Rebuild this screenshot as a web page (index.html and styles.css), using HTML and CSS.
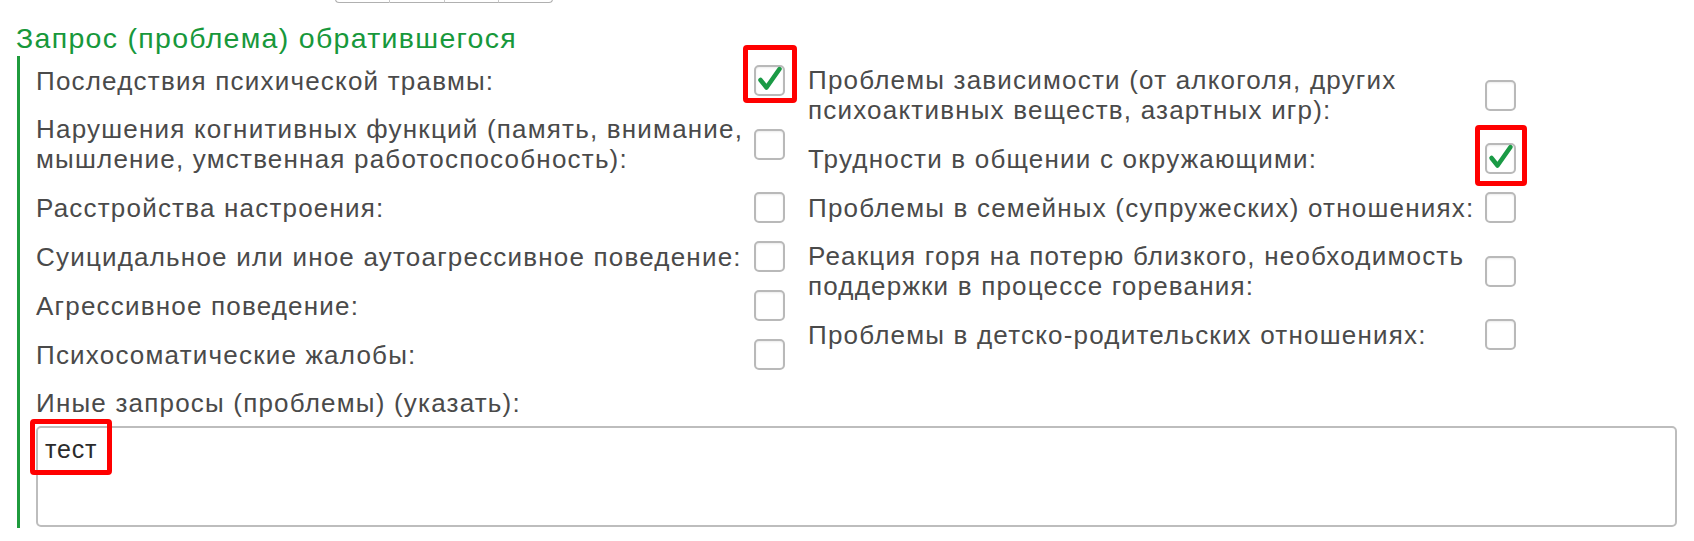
FILE: index.html
```html
<!DOCTYPE html>
<html lang="ru">
<head>
<meta charset="utf-8">
<link rel="stylesheet" href="styles.css">
</head>
<body>
<div class="page">
  <div class="topbar"><span></span><span></span><span></span><span></span></div>
  <h2 class="title">Запрос (проблема) обратившегося</h2>
  <div class="group">
    <div class="cols">
      <div class="col">
        <div class="row"><span class="label">Последствия психической травмы:</span><span class="cb checked"><svg viewBox="0 0 31 31"><polyline points="6.5,16 12.5,23.5 25.5,5"/></svg></span></div>
        <div class="row"><span class="label">Нарушения когнитивных функций (память, внимание,<br>мышление, умственная работоспособность):</span><span class="cb"></span></div>
        <div class="row"><span class="label">Расстройства настроения:</span><span class="cb"></span></div>
        <div class="row"><span class="label">Суицидальное или иное аутоагрессивное поведение:</span><span class="cb"></span></div>
        <div class="row"><span class="label">Агрессивное поведение:</span><span class="cb"></span></div>
        <div class="row"><span class="label">Психосоматические жалобы:</span><span class="cb"></span></div>
      </div>
      <div class="col">
        <div class="row"><span class="label">Проблемы зависимости (от алкоголя, других<br>психоактивных веществ, азартных игр):</span><span class="cb"></span></div>
        <div class="row"><span class="label">Трудности в общении с окружающими:</span><span class="cb checked"><svg viewBox="0 0 31 31"><polyline points="6.5,16 12.5,23.5 25.5,5"/></svg></span></div>
        <div class="row"><span class="label">Проблемы в семейных (супружеских) отношениях:</span><span class="cb"></span></div>
        <div class="row"><span class="label">Реакция горя на потерю близкого, необходимость<br>поддержки в процессе горевания:</span><span class="cb"></span></div>
        <div class="row"><span class="label">Проблемы в детско-родительских отношениях:</span><span class="cb"></span></div>
      </div>
    </div>
    <div class="other-label">Иные запросы (проблемы) (указать):</div>
    <div class="textarea">тест</div>
  </div>
  <div class="mark mark-1"></div>
  <div class="mark mark-2"></div>
  <div class="mark mark-3"></div>
</div>
</body>
</html>
```

FILE: styles.css
```css
html, body {
  margin: 0;
  padding: 0;
  background: #ffffff;
}
.page {
  position: relative;
  width: 1694px;
  height: 541px;
  overflow: hidden;
  font-family: "Liberation Sans", Arial, sans-serif;
  color: #4a4a4a;
}
.topbar {
  display: flex;
  margin-left: 335px;
  width: 218px;
  height: 4px;
  margin-top: -1px;
}
.topbar span {
  flex: 1;
  border-bottom: 1px solid #b0b0b0;
  border-right: 1px solid #c8c8c8;
}
.topbar span:first-child { border-bottom-left-radius: 4px; border-left: 1px solid #b0b0b0; }
.topbar span:last-child { border-bottom-right-radius: 4px; border-right: 1px solid #b0b0b0; }
.title {
  margin: 19px 0 0 16px;
  font-weight: normal;
  font-size: 28.5px;
  letter-spacing: 1.3px;
  line-height: 32px;
  color: #17983b;
}
.group {
  margin: 5px 0 0 17px;
  border-left: 3px solid #1f9b3d;
  padding-left: 16px;
  padding-bottom: 1px;
}
.cols {
  display: grid;
  grid-template-columns: 749px 708px;
  column-gap: 23px;
  align-items: start;
  margin-top: -3px;
}
.row {
  display: flex;
  align-items: center;
  gap: 8px;
  padding: 9px 0;
}
.label {
  flex: 1;
  font-size: 26px;
  letter-spacing: 1.2px;
  line-height: 30px;
  white-space: nowrap;
}
.cb {
  flex: none;
  width: 31px;
  height: 31px;
  box-sizing: border-box;
  border: 2px solid #b9b9b9;
  border-radius: 5px;
  box-shadow: inset 0 1px 2px rgba(0,0,0,0.08);
  background: #fff;
  position: relative;
}
.cb svg {
  position: absolute;
  left: -2px;
  top: -3px;
  width: 31px;
  height: 31px;
  overflow: visible;
}
.cb svg polyline {
  fill: none;
  stroke: #1a9a45;
  stroke-width: 4.5;
  stroke-linecap: round;
  stroke-linejoin: round;
}
.other-label {
  font-size: 26px;
  letter-spacing: 1.2px;
  line-height: 30px;
  padding: 9px 0 8px;
}
.textarea {
  width: 1641px;
  height: 101px;
  box-sizing: border-box;
  border: 2px solid #bdbdbd;
  border-radius: 5px;
  padding: 7px 7px;
  font-size: 25px;
  letter-spacing: 0.8px;
  line-height: 28px;
  color: #2b2b2b;
}
.mark {
  position: absolute;
  border: 5px solid #ff0000;
  border-radius: 4px;
  box-sizing: border-box;
}
.mark-1 { left: 743px; top: 45px; width: 54px; height: 58px; }
.mark-2 { left: 1475px; top: 125px; width: 52px; height: 61px; }
.mark-3 { left: 30px; top: 419px; width: 82px; height: 56px; }
```
